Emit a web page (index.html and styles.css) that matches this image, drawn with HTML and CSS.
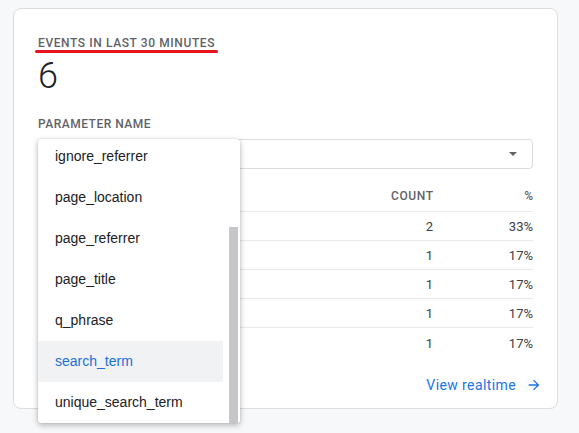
FILE: index.html
```html
<!DOCTYPE html>
<html lang="en">
<head>
<meta charset="utf-8">
<title>Events in last 30 minutes</title>
<link rel="stylesheet" href="styles.css">
</head>
<body>
<div class="card">
  <div class="title"><span class="title-text">EVENTS IN LAST 30 MINUTES</span></div>
  <div class="big">6</div>
  <div class="label">PARAMETER NAME</div>
  <div class="select-wrap">
    <div class="select">
      <span class="caret"></span>
    </div>
    <div class="menu">
      <div class="menu-list">
        <div class="item">ignore_referrer</div>
        <div class="item">page_location</div>
        <div class="item">page_referrer</div>
        <div class="item">page_title</div>
        <div class="item">q_phrase</div>
        <div class="item active">search_term</div>
        <div class="item">unique_search_term</div>
      </div>
      <div class="track"><div class="thumb"></div></div>
    </div>
  </div>
  <div class="table">
    <div class="row head"><span></span><span class="num">COUNT</span><span class="num">%</span></div>
    <div class="row"><span></span><span class="num">2</span><span class="num">33%</span></div>
    <div class="row"><span></span><span class="num">1</span><span class="num">17%</span></div>
    <div class="row"><span></span><span class="num">1</span><span class="num">17%</span></div>
    <div class="row"><span></span><span class="num">1</span><span class="num">17%</span></div>
    <div class="row last"><span></span><span class="num">1</span><span class="num">17%</span></div>
  </div>
  <div class="footer">
    <a class="link" href="#">View realtime
      <svg class="arrow" viewBox="0 0 24 24" width="16" height="16"><path d="M12 4l-1.41 1.41L16.17 11H4v2h12.17l-5.58 5.59L12 20l8-8z" fill="currentColor"/></svg>
    </a>
  </div>
</div>
</body>
</html>
```

FILE: styles.css
```css
* { box-sizing: border-box; }
html, body { margin: 0; }
html { background: #f7f8f9; }
body {
  min-height: 433px;
  padding: 8px 21px 0 13px;
  font-family: Roboto, "Liberation Sans", sans-serif;
  color: #202124;
}
.card {
  background: #fff;
  border: 1px solid #dadce0;
  border-radius: 8px;
  height: 401px;
  padding: 26px 24px 0 24px;
}
.title {
  font-size: 12px;
  line-height: 16px;
  font-weight: 500;
  color: #5f6368;
  letter-spacing: 0.6px;
}
.title-text {
  position: relative;
  display: inline-block;
}
.title-text::after {
  content: "";
  position: absolute;
  left: -3px;
  right: -3px;
  top: 15px;
  height: 2.5px;
  background: #e8141c;
  border-radius: 2px;
}
.big {
  margin-top: 5px;
  font-size: 36px;
  line-height: 40px;
  font-weight: 300;
  color: #202124;
}
.label {
  margin-top: 20px;
  font-size: 12px;
  line-height: 16px;
  font-weight: 500;
  color: #5f6368;
  letter-spacing: 0.5px;
}
.select-wrap {
  position: relative;
  margin-top: 7px;
}
.select {
  height: 30px;
  border: 1px solid #dadce0;
  border-radius: 4px;
  display: flex;
  justify-content: flex-end;
  align-items: center;
  padding-right: 15px;
}
.caret {
  width: 0;
  height: 0;
  border-left: 4px solid transparent;
  border-right: 4px solid transparent;
  border-top: 4px solid #5f6368;
}
.menu {
  position: absolute;
  left: 0;
  top: 0;
  width: 202px;
  height: 284px;
  background: #fff;
  border-radius: 3px;
  box-shadow: 0 2px 6px rgba(0,0,0,0.28), 0 0 2px rgba(0,0,0,0.12);
  display: flex;
  overflow: hidden;
  z-index: 2;
}
.menu-list {
  width: 185px;
  margin-top: -3px;
}
.item {
  height: 41px;
  display: flex;
  align-items: center;
  padding-left: 17px;
  padding-bottom: 2px;
  font-family: "Liberation Sans", Arial, sans-serif;
  font-size: 14px;
  color: #202124;
}
.item.active {
  background: #f1f2f3;
  color: #1a6fd8;
}
.track {
  width: 17px;
  padding-left: 6px;
  padding-top: 88px;
}
.thumb {
  width: 9px;
  height: 196px;
  background: #c6c6ca;
}
.table {
  font-size: 13px;
}
.row {
  display: grid;
  grid-template-columns: 1fr 80px 100px;
  height: 29px;
  align-items: center;
  border-bottom: 1px solid #e8eaed;
  color: #3c4043;
  padding-top: 1px;
}
.row.head {
  height: 43px;
  align-items: end;
  padding-bottom: 7px;
  font-size: 12px;
  line-height: 16px;
  font-weight: 500;
  color: #5f6368;
  letter-spacing: 0.6px;
}
.row.last { border-bottom: none; }
.num { text-align: right; }
.row.head .num { margin-right: -0.6px; }
.footer {
  display: flex;
  justify-content: flex-end;
  margin-top: 18px;
  margin-right: -9px;
}
.link {
  display: flex;
  align-items: center;
  height: 20px;
  font-size: 14px;
  line-height: 20px;
  color: #1a73e8;
  text-decoration: none;
  font-weight: 400;
  letter-spacing: 0.4px;
}
.arrow {
  margin-left: 10px;
}
```
